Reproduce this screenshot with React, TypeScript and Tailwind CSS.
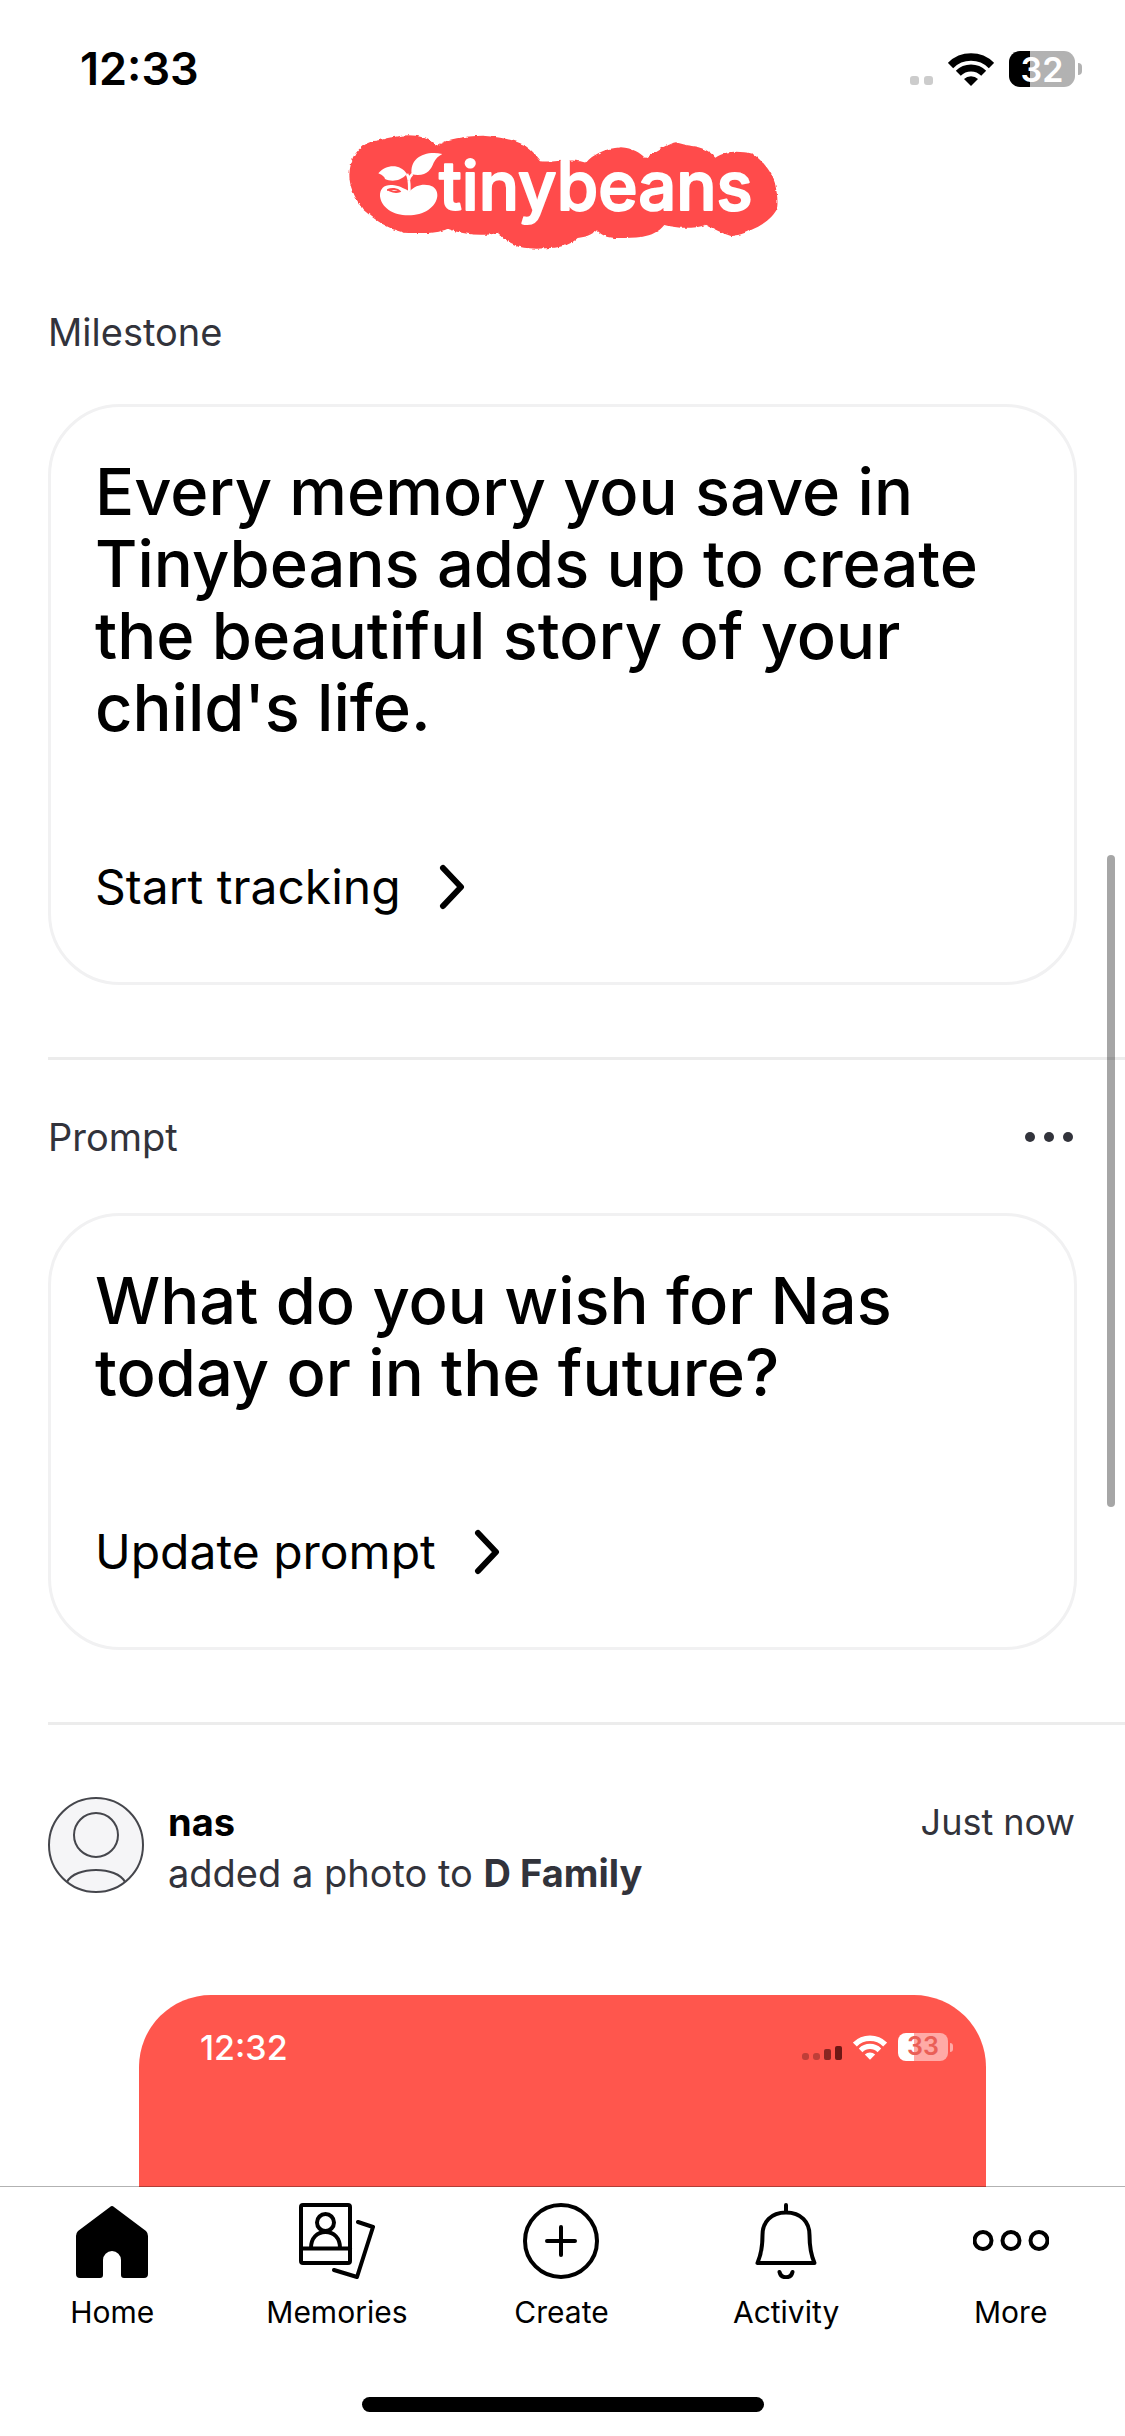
// Home feed : milestone card, prompt card, latest post, bottom tab bar
import type { ReactNode } from 'react'

function WifiIcon({ className }: { className: string }) {
  return (
    <svg className={className} viewBox="0 0 46 33" fill="none" stroke="currentColor" aria-hidden="true">
      <path d="M2.5 12.5A29 29 0 0 1 43.5 12.5" strokeWidth="7.6" />
      <path d="M10.3 20.3A18 18 0 0 1 35.7 20.3" strokeWidth="7" />
      <path d="M23 33L16 26A10 10 0 0 1 30 26Z" fill="currentColor" stroke="none" />
    </svg>
  )
}

function ChevronIcon() {
  return (
    <svg
      className="h-[46px] w-[26px]"
      viewBox="0 0 26 46"
      fill="none"
      stroke="currentColor"
      strokeWidth="6"
      strokeLinecap="round"
      strokeLinejoin="round"
      aria-hidden="true"
    >
      <path d="M4 4L22 23L4 42" />
    </svg>
  )
}

function Logo() {
  return (
    <svg className="h-[140px] w-[460px]" viewBox="2 0 460 140" role="img" aria-label="tinybeans">
      <defs>
        {/* Ragged paper edge around the badge */}
        <filter id="rough" x="-5%" y="-5%" width="110%" height="110%" colorInterpolationFilters="sRGB">
          <feTurbulence type="fractalNoise" baseFrequency="0.07" numOctaves="2" seed="4" />
          <feDisplacementMap in="SourceGraphic" scale="9" xChannelSelector="R" yChannelSelector="G" />
        </filter>
      </defs>
      <g transform="scale(0.3333)">
        <path
          filter="url(#rough)"
          fill="#ff4b4b"
          d="M55 165C57 115 80 78 125 63C150 62 165 54 185 52C235 40 285 45 316 78C350 55 400 49 455 47C510 50 550 60 580 75C608 95 618 108 630 124C675 128 710 114 765 128C785 105 820 85 870 82C905 85 928 98 942 114C965 98 985 87 1005 77C1015 76 1025 68 1035 67C1055 73 1065 75 1082 78C1110 82 1135 90 1153 113C1185 92 1220 92 1265 101C1305 130 1325 165 1332 190C1338 220 1342 240 1338 268C1320 300 1290 318 1255 332C1235 343 1220 345 1200 348C1170 338 1145 325 1125 314C1090 327 1040 326 1000 315C985 335 960 346 935 350C900 354 870 355 850 354C825 352 810 344 798 331C780 345 765 352 740 354C715 378 680 384 645 385C600 388 570 384 555 376C530 365 515 352 500 338C460 350 400 345 350 326C320 340 280 341 220 338C170 328 130 298 95 268C70 230 55 200 55 165Z"
        />
        <path fill="#fff" d="M142 160C165 132 208 130 228 162C205 186 180 185 162 177C160 168 150 164 142 160Z" />
        <path fill="#fff" d="M334 102C280 91 236 115 242 163C285 172 300 150 308 128C314 116 322 108 334 102Z" />
        <path fill="none" stroke="#fff" strokeWidth="8" d="M228 162C236 176 235 190 235 214M244 162C238 168 234 174 233 182" />
        <path
          fill="#fff"
          d="M147 228C146 203 164 191 190 196C210 199 222 208 236 214C252 196 275 191 295 196C312 201 320 212 319 228C316 262 278 286 232 286C186 286 150 262 147 228Z"
        />
        <path fill="none" stroke="#ff4b4b" strokeWidth="6" strokeLinecap="round" d="M171 210C180 205 200 206 206 214C196 218 182 214 176 211" />
      </g>
      <text
        x="108"
        y="90"
        fill="#fff"
        stroke="#fff"
        strokeWidth="2"
        strokeLinejoin="round"
        className="font-[Inter,sans-serif] text-[67px] font-medium"
      >
        tinybeans
      </text>
    </svg>
  )
}

function FeedCard({ title, action }: { title: string; action: string }) {
  return (
    <article className="mr-12 rounded-[72px] border-3 border-[#f1f1f2] pt-[49px] pr-[42px] pb-[67px] pl-[44px]">
      <h2 className="text-[65px] leading-[72px] font-medium">{title}</h2>
      <button type="button" className="mt-[115px] flex items-center gap-[38px] text-[48px] leading-[56px]">
        {action}
        <ChevronIcon />
      </button>
    </article>
  )
}

const TABS: { label: string; icon: ReactNode }[] = [
  {
    label: 'Home',
    icon: (
      <path
        fill="currentColor"
        stroke="none"
        d="M36 4Q38 2 40 4L72 28Q74 30 74 33V71Q74 75 70 75H50Q47 75 47 72V57A9 9 0 0 0 29 57V72Q29 75 26 75H6Q2 75 2 71V33Q2 30 4 28Z"
      />
    ),
  },
  {
    label: 'Memories',
    icon: (
      <>
        <rect x="2" y="2" width="49" height="58" rx="2" />
        <path d="M2 45.500H51" />
        <circle cx="26.500" cy="19.500" r="8.500" />
        <path d="M12 45C12 35 18 29 26.500 29S41 35 41 45" />
        <path d="M59 19L74 24L58 74L35 67" />
      </>
    ),
  },
  {
    label: 'Create',
    icon: (
      <>
        <circle cx="38" cy="38" r="36" />
        <path d="M38 24V52M24 38H52" />
      </>
    ),
  },
  {
    label: 'Activity',
    icon: (
      <>
        <path d="M38 2V9M38 9.500C23 9.500 14.500 19 14.500 32C14.500 44 13 52 9.500 60H66.500C63 52 61.500 44 61.500 32C61.500 19 53 9.500 38 9.500Z" />
        <path d="M31.500 69C33 76 43 76 44.500 69" />
      </>
    ),
  },
  {
    label: 'More',
    icon: (
      <>
        <circle cx="10" cy="37.500" r="8.500" />
        <circle cx="38" cy="37.500" r="8.500" />
        <circle cx="66" cy="37.500" r="8.500" />
      </>
    ),
  },
]

export default function App() {
  return (
    <div className="relative flex h-screen flex-col overflow-hidden bg-white font-[Inter,sans-serif] text-black">
      <header>
        {/* Status bar */}
        <div className="flex h-[120px] items-center justify-between pt-[18px] pr-[43px] pl-20">
          <span className="text-[45px] font-semibold">12:33</span>
          <div className="flex items-center">
            <div className="mt-[23px] mr-[15px] flex gap-[5px]">
              <span className="size-[9px] rounded-[3px] bg-[#cccccc]" />
              <span className="size-[9px] rounded-[3px] bg-[#cccccc]" />
            </div>
            <WifiIcon className="mr-[15px] h-[33px] w-[46px]" />
            <span className="flex h-9 w-[66px] items-center justify-center rounded-[11px] bg-linear-to-r from-black from-[21px] to-[#b2b2b2] to-[21px] text-[34px] font-semibold text-white">
              32
            </span>
            <span className="ml-[3px] h-3 w-1 rounded-r-full bg-[#b2b2b2]" />
          </div>
        </div>
        <div className="flex justify-center">
          <Logo />
        </div>
      </header>

      <main className="flex min-h-0 flex-1 flex-col pl-12">
        {/* Milestone */}
        <section className="border-b-3 border-[#ececec] pt-12 pb-[72px]">
          <div className="mb-12 text-[38px] leading-[48px] text-[#32333b]">Milestone</div>
          <FeedCard
            title="Every memory you save in Tinybeans adds up to create the beautiful story of your child's life."
            action="Start tracking"
          />
        </section>

        {/* Prompt */}
        <section className="border-b-3 border-[#ececec] pt-[53px] pb-[72px]">
          <div className="mr-[52px] mb-[52px] flex items-center justify-between text-[38px] leading-[48px] text-[#32333b]">
            Prompt
            <button type="button" aria-label="Prompt options" className="flex gap-[9px]">
              <span className="size-[10px] rounded-full bg-current" />
              <span className="size-[10px] rounded-full bg-current" />
              <span className="size-[10px] rounded-full bg-current" />
            </button>
          </div>
          <FeedCard title="What do you wish for Nas today or in the future?" action="Update prompt" />
        </section>

        {/* Latest post */}
        <article className="flex min-h-0 flex-1 flex-col pt-[72px]">
          <div className="mr-[50px] flex gap-6 text-[38px] leading-[51px] text-[#32333b]">
            <svg className="size-24" viewBox="0 0 96 96" fill="none" stroke="#45464c" strokeWidth="2" aria-hidden="true">
              <circle cx="48" cy="48" r="47" fill="#f5f5f7" />
              <circle cx="48" cy="38" r="22" />
              <path d="M19 85C27 69 69 69 77 85" />
            </svg>
            <div className="flex-1">
              <p className="font-bold text-black">nas</p>
              <p>
                added a photo to <strong className="font-bold">D Family</strong>
              </p>
            </div>
            <time className="text-[36px]">Just now</time>
          </div>

          {/* Photo, cut off by the tab bar */}
          <div className="mt-[96px] mr-[139px] ml-[91px] min-h-0 flex-1 rounded-t-[72px] bg-[#ff564d] pt-8 text-white">
            <div className="flex h-10 items-center justify-between pr-[33px] pl-[61px]">
              <span className="text-[34px] font-medium">12:32</span>
              <div className="flex items-center">
                <div className="mr-[11px] flex h-[25px] items-end gap-1">
                  <span className="size-[7px] rounded-[3px] bg-[#bf3e38]" />
                  <span className="size-[7px] rounded-[3px] bg-[#bf3e38]" />
                  <span className="h-[11px] w-[7px] rounded-[2px] bg-[#8a2622]" />
                  <span className="h-[14px] w-[7px] rounded-[2px] bg-[#6d1815]" />
                </div>
                <WifiIcon className="mr-[11px] h-[25px] w-[34px]" />
                <span className="flex h-7 w-[50px] items-center justify-center rounded-[8px] bg-linear-to-r from-white from-[16px] to-[#ffaaa6] to-[16px] text-[25px] font-semibold text-[#ea5f57]">
                  33
                </span>
                <span className="ml-[2px] h-[9px] w-[3px] rounded-r-full bg-[#ffaaa6]" />
              </div>
            </div>
          </div>
        </article>
      </main>

      {/* Tab bar, its hairline lies over the feed */}
      <nav className="z-10 -mt-px border-t border-black/30 bg-white bg-clip-padding pt-4 pb-6">
        <div className="grid grid-cols-5 pr-[2px]">
          {TABS.map(({ label, icon }) => (
            <button key={label} type="button" className="flex flex-col items-center gap-[14px] text-[30px] leading-[38px]">
              <svg
                className="size-[76px]"
                viewBox="0 0 76 76"
                fill="none"
                stroke="currentColor"
                strokeWidth="4"
                strokeLinecap="round"
                strokeLinejoin="round"
                aria-hidden="true"
              >
                {icon}
              </svg>
              {label}
            </button>
          ))}
        </div>
        {/* Home indicator */}
        <div className="mx-auto mt-[66px] h-[15px] w-[402px] rounded-full bg-black" />
      </nav>

      {/* Scroll thumb */}
      <div className="absolute top-[855px] right-[10px] h-[652px] w-2 rounded-full bg-black/35" />
    </div>
  )
}
